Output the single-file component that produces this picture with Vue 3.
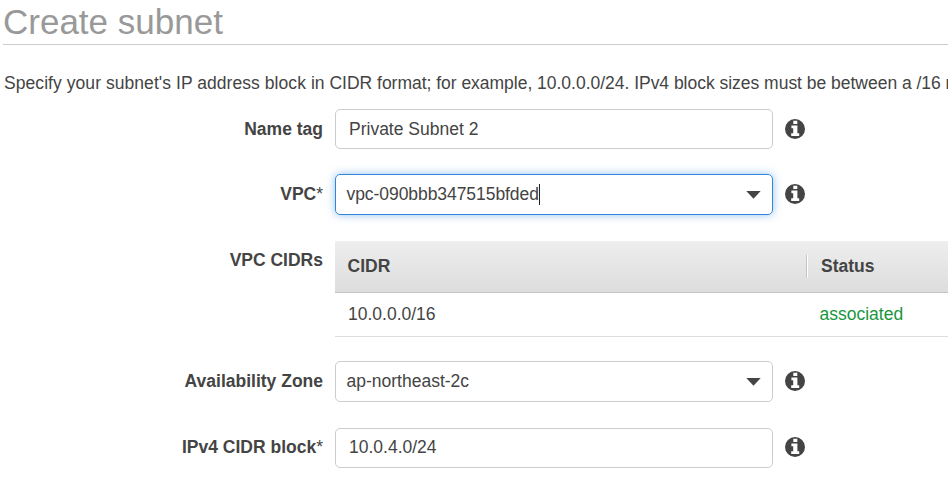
<script setup>
import { ref } from 'vue'

const nameTag = ref('Private Subnet 2')
const vpc = ref('vpc-090bbb347515bfded')
const zone = ref('ap-northeast-2c')
const cidr = ref('10.0.4.0/24')
const vpcCidrs = [{ cidr: '10.0.0.0/16', status: 'associated' }]
</script>

<template>
  <main class="page">
    <svg class="defs" width="0" height="0" aria-hidden="true">
      <symbol id="info" viewBox="0 0 20 20">
        <circle cx="10" cy="10" r="10" fill="#444" />
        <path fill="#fff" d="M8.3 1.8h4v3.3h-4zM6.4 6.6h6v7.6h1.8v2.7H6.2v-2.7h2V9.3H6.4z" />
      </symbol>
      <symbol id="caret" viewBox="0 0 15 9">
        <path fill="#444" d="M0.3 1h14.4L7.5 8.8z" />
      </symbol>
    </svg>

    <h1 class="title">Create subnet</h1>
    <p class="intro"><span class="lead">Specify your subnet's IP address block in</span> CIDR format; for example, 10.0.0.0/24. IPv4 block sizes must be between a /16 netmask</p>

    <div class="row name">
      <label class="label">Name tag</label>
      <div class="field">{{ nameTag }}</div>
      <svg class="info"><use href="#info" /></svg>
    </div>

    <div class="row vpc">
      <label class="label">VPC<span class="star">*</span></label>
      <div class="field select focused">
        <span class="value">{{ vpc }}</span>
        <svg class="caret"><use href="#caret" /></svg>
      </div>
      <svg class="info"><use href="#info" /></svg>
    </div>

    <div class="row cidrs">
      <label class="label">VPC CIDRs</label>
      <div class="table">
        <div class="thead">
          <span class="th">CIDR</span>
          <span class="th status">Status</span>
        </div>
        <div v-for="item in vpcCidrs" :key="item.cidr" class="tr">
          <span>{{ item.cidr }}</span>
          <span class="ok">{{ item.status }}</span>
        </div>
      </div>
    </div>

    <div class="row zone">
      <label class="label">Availability Zone</label>
      <div class="field select">
        <span>{{ zone }}</span>
        <svg class="caret"><use href="#caret" /></svg>
      </div>
      <svg class="info"><use href="#info" /></svg>
    </div>

    <div class="row block">
      <label class="label">IPv4 CIDR block<span class="star">*</span></label>
      <div class="field">{{ cidr }}</div>
      <svg class="info"><use href="#info" /></svg>
    </div>
  </main>
</template>

<style>
body {
  margin: 0;
  background: #fff;
  overflow: hidden;
}
</style>

<style scoped>
.page {
  box-sizing: border-box;
  width: 948px;
  height: 483px;
  padding-left: 3px;
  overflow: hidden;
  font-family: "Liberation Sans", Arial, sans-serif;
  font-size: 17.5px;
  line-height: 20px;
  color: #444;
}
.defs {
  display: block;
}
.title {
  box-sizing: border-box;
  height: 45px;
  margin: 0;
  padding-top: 2px;
  border-bottom: 1px solid #ccc;
  font-size: 35px;
  font-weight: 400;
  line-height: 40px;
  color: #999;
}
.intro {
  margin: 28px 0 16px 1px;
  white-space: nowrap;
  letter-spacing: -0.02px;
}
.lead {
  letter-spacing: 0.06px;
}
.row {
  display: grid;
  grid-template-columns: 320px 438px 20px;
  column-gap: 12px;
  align-items: center;
}
.label {
  font-weight: 700;
  text-align: right;
  white-space: nowrap;
}
.star {
  font-weight: 400;
}
.field {
  box-sizing: border-box;
  height: 40px;
  padding: 0 13px;
  border: 1px solid #ccc;
  border-radius: 5px;
  line-height: 38px;
  white-space: nowrap;
}
.select {
  display: flex;
  align-items: center;
  justify-content: space-between;
  height: 41px;
  padding: 0 11px;
}
.focused {
  border-color: #2f86dd;
  box-shadow: 0 0 8px rgba(47, 134, 221, 0.5);
}
.value {
  height: 21px;
  margin-left: -0.5px;
  line-height: 21px;
  letter-spacing: -0.06px;
  border-right: 1px solid #222;
}
.caret {
  width: 15px;
  height: 9px;
}
.info {
  width: 20px;
  height: 20px;
}
.vpc {
  margin-top: 25px;
}
.vpc > .label,
.vpc > .info,
.zone > .label,
.zone > .info,
.block > .label,
.block > .info {
  margin-bottom: 2px;
}
.cidrs {
  grid-template-columns: 320px 1fr;
  align-items: start;
  margin-top: 26px;
}
.cidrs .label {
  padding-top: 9px;
}
.thead,
.tr {
  box-sizing: border-box;
  display: grid;
  grid-template-columns: 471px 1fr;
  align-items: center;
}
.thead {
  height: 52px;
  border-bottom: 1px solid #c4c4c4;
  background: linear-gradient(#eee, #ddd);
  font-weight: 700;
}
.th {
  padding-left: 12.5px;
  line-height: 23px;
}
.status {
  padding-left: 14px;
  border-left: 1px solid #c4c4c4;
  box-shadow: inset 1px 0 #fff;
}
.tr {
  height: 44px;
  padding: 0 0 2px 13px;
  border-bottom: 1px solid #ddd;
}
.ok {
  padding-left: 0.5px;
  color: #1a9641;
}
.zone {
  margin-top: 24px;
}
.zone .field span {
  margin: 0 0 2px -0.5px;
}
.block {
  margin-top: 26px;
}
.block .field {
  line-height: 36px;
}
</style>
